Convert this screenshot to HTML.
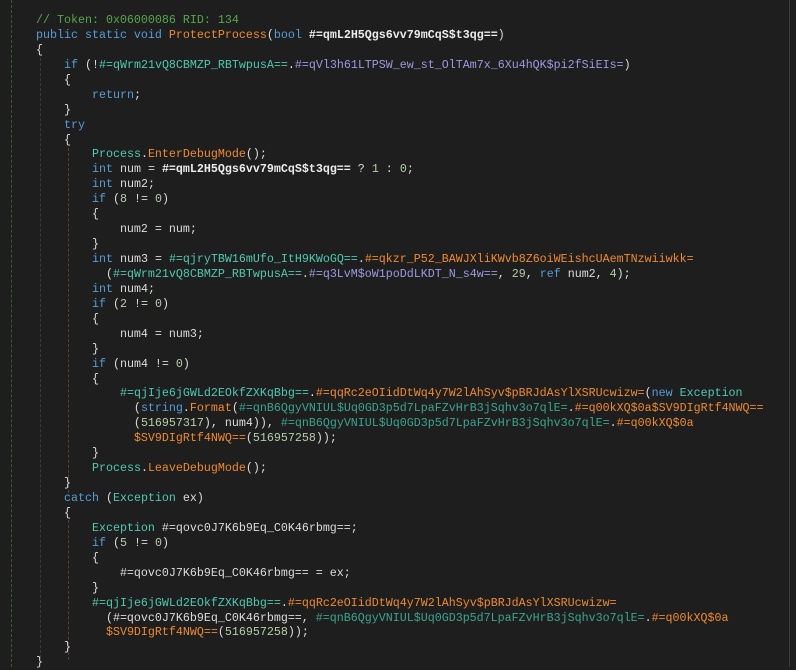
<!DOCTYPE html>
<html><head><meta charset="utf-8"><style>
html,body{margin:0;padding:0;background:#1e1e1e;width:796px;height:667px;overflow:hidden}
pre{position:absolute;left:36px;top:13px;margin:0;font-family:"Liberation Mono",monospace;font-size:11.67px;line-height:14.93px;color:#dcdcdc;white-space:pre}
.k{color:#569cd6}.t{color:#4ec9b0}.m{color:#ef8a2e}.c{color:#57a64a}.n{color:#b5cea8}.f{color:#9a9ae0}.g{color:#3aa58c}.p{color:#ececec;font-weight:bold}
.v{position:absolute;width:0;border-left:1px dashed #3a3a3a}
</style></head><body>
<div class="v" style="left:11px;top:0;height:667px;border-color:#2e5a3e"></div>
<div class="v" style="left:40px;top:58px;height:600px"></div>
<div class="v" style="left:68px;top:148px;height:345px;border-color:#5a3a3a"></div>
<div class="v" style="left:68px;top:520px;height:140px;border-color:#5a3a3a"></div>
<div style="position:absolute;left:789px;top:0;width:1px;height:667px;background:#3a3a3a"></div>
<pre><span class="c">// Token: 0x06000086 RID: 134</span>
<span class="k">public static void</span> <span class="m">ProtectProcess</span>(<span class="k">bool</span> <span class="p">#=qmL2H5Qgs6vv79mCqS$t3qg==</span>)
{
    <span class="k">if</span> (!<span class="t">#=qWrm21vQ8CBMZP_RBTwpusA==</span>.<span class="f">#=qVl3h61LTPSW_ew_st_OlTAm7x_6Xu4hQK$pi2fSiEIs=</span>)
    {
        <span class="k">return</span>;
    }
    <span class="k">try</span>
    {
        <span class="t">Process</span>.<span class="m">EnterDebugMode</span>();
        <span class="k">int</span> num = <span class="p">#=qmL2H5Qgs6vv79mCqS$t3qg==</span> ? <span class="n">1</span> : <span class="n">0</span>;
        <span class="k">int</span> num2;
        <span class="k">if</span> (<span class="n">8</span> != <span class="n">0</span>)
        {
            num2 = num;
        }
        <span class="k">int</span> num3 = <span class="t">#=qjryTBW16mUfo_ItH9KWoGQ==</span>.<span class="m">#=qkzr_P52_BAWJXliKWvb8Z6oiWEishcUAemTNzwiiwkk=</span>
          (<span class="t">#=qWrm21vQ8CBMZP_RBTwpusA==</span>.<span class="f">#=q3LvM$oW1poDdLKDT_N_s4w==</span>, <span class="n">29</span>, <span class="k">ref</span> num2, <span class="n">4</span>);
        <span class="k">int</span> num4;
        <span class="k">if</span> (<span class="n">2</span> != <span class="n">0</span>)
        {
            num4 = num3;
        }
        <span class="k">if</span> (num4 != <span class="n">0</span>)
        {
            <span class="t">#=qjIje6jGWLd2EOkfZXKqBbg==</span>.<span class="m">#=qqRc2eOIidDtWq4y7W2lAhSyv$pBRJdAsYlXSRUcwizw=</span>(<span class="k">new</span> <span class="t">Exception</span>
              (<span class="k">string</span>.<span class="m">Format</span>(<span class="g">#=qnB6QgyVNIUL$Uq0GD3p5d7LpaFZvHrB3jSqhv3o7qlE=</span>.<span class="m">#=q00kXQ$0a$SV9DIgRtf4NWQ==</span>
              (<span class="n">516957317</span>), num4)), <span class="g">#=qnB6QgyVNIUL$Uq0GD3p5d7LpaFZvHrB3jSqhv3o7qlE=</span>.<span class="m">#=q00kXQ$0a</span>
              <span class="m">$SV9DIgRtf4NWQ==</span>(<span class="n">516957258</span>));
        }
        <span class="t">Process</span>.<span class="m">LeaveDebugMode</span>();
    }
    <span class="k">catch</span> (<span class="t">Exception</span> ex)
    {
        <span class="t">Exception</span> #=qovc0J7K6b9Eq_C0K46rbmg==;
        <span class="k">if</span> (<span class="n">5</span> != <span class="n">0</span>)
        {
            #=qovc0J7K6b9Eq_C0K46rbmg== = ex;
        }
        <span class="t">#=qjIje6jGWLd2EOkfZXKqBbg==</span>.<span class="m">#=qqRc2eOIidDtWq4y7W2lAhSyv$pBRJdAsYlXSRUcwizw=</span>
          (#=qovc0J7K6b9Eq_C0K46rbmg==, <span class="g">#=qnB6QgyVNIUL$Uq0GD3p5d7LpaFZvHrB3jSqhv3o7qlE=</span>.<span class="m">#=q00kXQ$0a</span>
          <span class="m">$SV9DIgRtf4NWQ==</span>(<span class="n">516957258</span>));
    }
}</pre>
</body></html>
